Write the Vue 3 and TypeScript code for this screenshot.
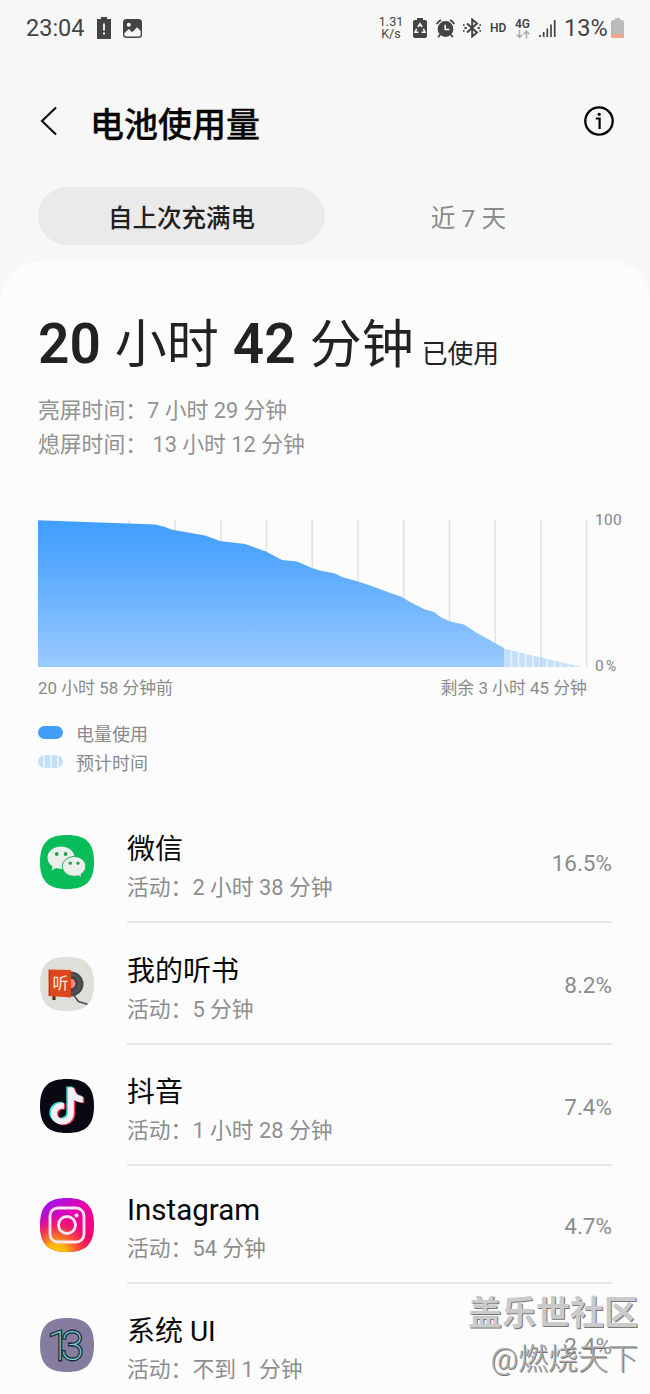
<script setup lang="ts">
interface AppUsage {
  id: string
  name: string
  activity: string
  percent: string
}

const apps: AppUsage[] = [
  { id: 'wechat', name: '微信', activity: '活动：2 小时 38 分钟', percent: '16.5%' },
  { id: 'audiobook', name: '我的听书', activity: '活动：5 分钟', percent: '8.2%' },
  { id: 'douyin', name: '抖音', activity: '活动：1 小时 28 分钟', percent: '7.4%' },
  { id: 'instagram', name: 'Instagram', activity: '活动：54 分钟', percent: '4.7%' },
  { id: 'systemui', name: '系统 UI', activity: '活动：不到 1 分钟', percent: '2.4%' },
]

const gridLines: number[] = Array.from({ length: 11 }, (_, i) => 91.3 + i * 45.74)
const stripes: number[] = Array.from({ length: 11 }, (_, i) => 473.4 + i * 7.15)
const squircle = 'M27 0C46 0 54 8 54 27S46 54 27 54 0 46 0 27 8 0 27 0Z'
const note = 'M27.5 8H33.5C34 13 37.5 16.5 42.5 17V23C39 23 36 22 33.5 20.2V33.5C33.5 40.5 28 45 22 45C15.5 45 10.5 40 10.5 34C10.5 27.5 16 22.5 23.5 23.2V29.5C20 28.7 16.7 30.7 16.7 34C16.7 37 19 39 22 39C25.3 39 27.5 36.7 27.5 33.5Z'
</script>

<template>
  <main class="screen">
    <header class="status">
      <span class="clock">23:04</span>
      <svg class="warn" width="14" height="22" viewBox="0 0 14 22"><path d="M4 0h6v2h4v20H0V2h4z" fill="#444" /><path d="M7 6.5v7M7 15.5v2" stroke="#fff" stroke-width="1.8" /></svg>
      <svg class="photo" width="19" height="19" viewBox="0 0 19 19"><rect width="19" height="19" rx="3.5" fill="#444" /><circle cx="5.8" cy="5.8" r="2" fill="#f7f7f7" /><path d="M1.3 14.3l4.5-4.2 3.4 3.2 4.9-5.1 3.6 3.7v3.3q0 2.2-2.2 2.2h-12q-2.2 0-2.2-2.2z" fill="#f7f7f7" /></svg>
      <span class="spacer"></span>
      <span class="speed"><span>1.31</span><span>K/s</span></span>
      <svg class="saver" width="14" height="20" viewBox="0 0 14 20"><path d="M4 0h6v2h2q2 0 2 2v14q0 2-2 2H2q-2 0-2-2V4q0-2 2-2h2z" fill="#444" /><path d="M4.900 9L7 5.800 9.100 9M10.400 10.800l1.500 3.400H8.500M3.600 10.800l-1.500 3.400h3.400" fill="none" stroke="#f7f7f7" stroke-width="1.600" /></svg>
      <svg class="alarm" width="19" height="19" viewBox="0 0 19 19"><circle cx="9.5" cy="10" r="7.9" fill="#444" /><path d="M.8 5.200Q2 2.400 5 1.200M14 1.200q3 1.200 4.200 4M4.200 15.500l-2 2.700M14.800 15.500l2 2.700" fill="none" stroke="#444" stroke-width="1.800" /><path d="M9.200 5.800v4.700h4.200" fill="none" stroke="#fff" stroke-width="1.5" /></svg>
      <svg class="bt" width="18" height="20" viewBox="0 0 18 20"><path d="M4 5.500l10 9-4.800 4V1.500l4.800 4-10 9" fill="none" stroke="#444" stroke-width="2" /><path d="M1.500 10h2.300M14.500 10h2.300M0 6.800l1.600.7M18 6.800l-1.600.7M0 13.200l1.600-.7M18 13.200l-1.600-.7" stroke="#444" stroke-width="1.900" /></svg>
      <span class="hd">HD</span>
      <span class="network"><span>4G</span><svg width="14" height="9" viewBox="0 0 14 9"><path d="M3.5 0v7M.7 4.5l2.8 3 2.8-3M10.5 8.5v-7M7.7 4.2l2.8-3 2.8 3" fill="none" stroke="#aaa" stroke-width="1.5" /></svg></span>
      <svg class="signal" width="17" height="17" viewBox="0 0 17 17"><path d="M1 15v2M4.7 12v5M8.3 8.5V17M12 4.5V17M15.7 0v17" stroke="#444" stroke-width="1.7" /></svg>
      <span class="level">13%</span>
      <svg class="battery" width="13" height="20" viewBox="0 0 13 20"><path d="M4 0h5v2h2q2 0 2 2v14q0 2-2 2H2q-2 0-2-2V4q0-2 2-2h2z" fill="#bbb" /><path d="M0 16h13v2q0 2-2 2H2q-2 0-2-2z" fill="#f4a58d" /></svg>
    </header>

    <nav class="titlebar">
      <svg class="back" width="18" height="30" viewBox="0 0 18 30"><path d="M16 1.5L2 15l14 13.5" fill="none" stroke="#111" stroke-width="2.2" /></svg>
      <h1>电池使用量</h1>
      <svg class="info" width="30" height="30" viewBox="0 0 30 30"><circle cx="15" cy="15" r="13.7" fill="none" stroke="#000" stroke-width="2.3" /><circle cx="15.2" cy="8.3" r="1.6" /><path d="M11.8 12.5h3.8V23" fill="none" stroke="#000" stroke-width="2.2" /></svg>
    </nav>

    <div class="tabs">
      <button class="tab active">自上次充满电</button>
      <button class="tab">近 7 天</button>
    </div>

    <section class="panel">
      <h2 class="total"><b>20</b><span>小时</span><b>42</b><span>分钟</span><small>已使用</small></h2>
      <p class="detail">亮屏时间：7 小时 29 分钟</p>
      <p class="detail">熄屏时间： 13 小时 12 分钟</p>

      <div class="chart">
        <svg width="551" height="147" viewBox="0 0 551 147">
          <defs>
            <linearGradient id="usage" x1="0" y1="0" x2="0" y2="1"><stop offset="0" stop-color="#419fff" /><stop offset=".25" stop-color="#52a6ff" /><stop offset="1" stop-color="#9acaff" /></linearGradient>
            <clipPath id="forecast"><path d="M466 128.5L544 147H466Z" /></clipPath>
          </defs>
          <path v-for="x in gridLines" :key="x" :d="`M${x} 0V147`" stroke="#e4e4e5" stroke-width="1.7" />
          <path d="M0 .3L117 4.5 127 7 133 9.5 167 15.5 182 21 207 24 228 31.5 244 40 259 41.5 274 48 282 50.5 297 53.5 304 57 320 61.5 335 66.5 351 72.5 364 77 372 82 387 89.5 396 92 403 97.5 412 101.5 426 104.5 439 113 457 123 466 128V147H0Z" fill="url(#usage)" />
          <g clip-path="url(#forecast)">
            <path d="M466 128.5L544 147H466Z" fill="#c5dff8" />
            <path v-for="x in stripes" :key="x" :d="`M${x} 120v27`" stroke="#e6f2fd" stroke-width="1.6" />
            <path d="M503 120v27" stroke="#b9d3ec" stroke-width="1.5" />
          </g>
        </svg>
        <div class="scale"><span>100</span><span>0<i>%</i></span></div>
      </div>
      <div class="range"><span>20 小时 58 分钟前</span><span>剩余 3 小时 45 分钟</span></div>
      <ul class="legend">
        <li><span class="pill"></span>电量使用</li>
        <li><span class="pill expected"></span>预计时间</li>
      </ul>

      <ul class="apps">
        <li v-for="app in apps" :key="app.id" :class="['app', app.id]">
          <svg class="icon" width="54" height="54" viewBox="0 0 54 54">
            <template v-if="app.id === 'wechat'">
              <path :d="squircle" fill="#07bd59" />
              <path d="M21 11.5c-7.8 0-13.5 5-13.5 11.2 0 3.6 1.9 6.6 5 8.7l-1 4 4.8-2.3q2.2.8 4.7.8c7.5 0 13.5-5 13.5-11.2S28.800 11.500 21 11.500z" fill="#ebefec" />
              <path d="M34.300 21.500c-6.600 0-12 4.400-12 9.900s5.400 9.900 12 9.900q2 0 3.900-.6l3.600 2-.8-3.500c3-1.900 4.800-4.700 4.800-7.800 0-5.500-5.200-9.900-11.500-9.900z" fill="#ebefec" stroke="#18ae5b" stroke-width="1" />
              <g fill="#239c5b"><circle cx="16.800" cy="19" r="1.900" /><circle cx="25.600" cy="19" r="1.900" /><circle cx="30.300" cy="28.200" r="1.600" /><circle cx="38" cy="28.200" r="1.600" /></g>
            </template>
            <template v-else-if="app.id === 'audiobook'">
              <path :d="squircle" fill="#dfded8" />
              <circle cx="31" cy="27" r="12.500" fill="#48494c" /><circle cx="31" cy="27" r="9" fill="none" stroke="#68696c" stroke-width=".7" /><circle cx="30.500" cy="26.500" r="5.500" fill="#ed8a7d" stroke="#292a2c" />
              <path d="M12.500 39h3v4h-3z" fill="#4e2a20" /><path d="M8.500 12.500L31 13v27.500L8.500 39z" fill="#dc471d" /><path d="M9.500 13v26" stroke="#b93717" />
              <text x="12.500" y="32" font-size="16" fill="#ffe9df" class="cover">听</text>
              <path d="M34 38.500l4.500 6 9 2.800" fill="none" stroke="#4c4c4c" stroke-width="1.500" />
            </template>
            <template v-else-if="app.id === 'douyin'">
              <path :d="squircle" fill="#080913" />
              <path :d="note" fill="#3cdcd8" transform="translate(-1.200 -.5)" /><path :d="note" fill="#f52f57" transform="translate(1.800 1.200)" /><path :d="note" fill="#f4eff2" transform="translate(.4 .5)" />
            </template>
            <template v-else-if="app.id === 'instagram'">
              <defs>
                <linearGradient id="ig-base" x1=".15" y1="0" x2=".85" y2="1"><stop stop-color="#9818f2" /><stop offset=".42" stop-color="#eb00a8" /><stop offset="1" stop-color="#f20c55" /></linearGradient>
                <radialGradient id="ig-warm" cx=".3" cy="1.050" r=".75"><stop stop-color="#ffd600" /><stop offset=".28" stop-color="#fbb00f" /><stop offset=".65" stop-color="#f34039" stop-opacity=".8" /><stop offset="1" stop-color="#eb0878" stop-opacity="0" /></radialGradient>
              </defs>
              <path :d="squircle" fill="url(#ig-base)" /><path :d="squircle" fill="url(#ig-warm)" />
              <g fill="none" stroke="#ffe6f2" stroke-width="2.800"><rect x="10" y="10" width="34" height="34" rx="8" /><circle cx="27" cy="27" r="8.500" /></g><circle cx="36.500" cy="17.500" r="2.100" fill="#ffe6f2" />
            </template>
            <template v-else>
              <path :d="squircle" fill="#857ca0" />
              <text x="7.500 21" y="41.500" class="version edge">13</text>
              <text x="7.500 21" y="41.500" class="version">13</text>
            </template>
          </svg>
          <div class="body">
            <div class="copy"><strong>{{ app.name }}</strong><span>{{ app.activity }}</span></div>
            <span class="percent">{{ app.percent }}</span>
          </div>
        </li>
      </ul>
    </section>
    <div class="watermark"><b>盖乐世社区</b><span>@燃烧天下</span></div>
  </main>
</template>

<style>
body { margin: 0; overflow: hidden; }
</style>

<style scoped>
* { box-sizing: border-box; }
.screen { position: relative; width: 650px; height: 1394px; overflow: hidden; background: #f7f7f7; font-family: Roboto, "Noto Sans CJK SC", sans-serif; color: #222; }
h1, h2, p, ul { margin: 0; padding: 0; font-weight: 400; }
ul { list-style: none; }
svg { display: block; flex: none; }
.status { display: flex; align-items: center; height: 56px; padding: 0 26px 0 26px; color: #444; white-space: nowrap; }
.clock { width: 71px; font-size: 23.500px; }
.photo { margin-left: 12px; }
.spacer { flex: 1; }
.speed { display: flex; flex-direction: column; align-items: center; width: 26px; font-size: 12.500px; line-height: 12px; margin-right: 9px; }
.saver { margin-right: 9px; }
.alarm { margin-right: 8px; }
.bt { margin-right: 9px; }
.hd { width: 17px; font-size: 12px; font-weight: 600; margin-right: 7px; }
.network { display: flex; flex-direction: column; align-items: center; width: 17px; font-size: 12px; line-height: 12px; font-weight: 600; margin-right: 8px; }
.signal { margin-right: 8px; }
.level { width: 46px; font-size: 23.500px; }
.status .saver, .status .alarm, .status .bt, .status .hd, .status .network, .status .speed, .status .signal, .status .level { transform: translateX(-1px); }
.titlebar { display: flex; align-items: center; height: 131px; padding: 0 36px 0 40px; }
.back, .info { margin-bottom: 1px; }
h1 { flex: 1; margin: 7px 0 0 32px; font-size: 34px; line-height: 50px; font-weight: 500; -webkit-text-stroke: .3px #050505; color: #050505; }
.tabs { display: flex; height: 74px; padding: 0 38px; }
.tab { width: 287px; height: 58px; padding: 6px 0 0; border: 0; border-radius: 29px; background: transparent; font: 400 24.700px/52px Roboto, "Noto Sans CJK SC", sans-serif; color: #8b8b8b; }
.active { background: #eaeaea; color: #202020; font-size: 24.500px; font-weight: 500; }
.panel { height: 1140px; padding: 43px 38px 0; border-radius: 40px 40px 0 0; background: #fcfcfc; }
.total { display: flex; align-items: baseline; height: 80px; line-height: 80px; white-space: nowrap; }
.total b { font-size: 55px; font-weight: 600; }
.total span { margin: 0 14px 0 14px; font-size: 52px; }
.total small { margin-left: -6px; font-size: 25.800px; }
.detail { height: 34px; font-size: 21.800px; line-height: 34px; color: #929292; white-space: pre; }
.detail:first-of-type { margin-top: 10px; }
.chart { display: flex; height: 147px; margin-top: 58px; }
.scale { display: flex; flex-direction: column; justify-content: space-between; margin: -9px 0 -8px 6px; font-size: 15.500px; line-height: 18px; letter-spacing: .3px; color: #858585; }
.scale i { font-style: normal; margin-left: 2px; font-size: 14px; }
.range { display: flex; justify-content: space-between; width: 549px; height: 42px; font-size: 16.900px; line-height: 43px; color: #8a8a8a; }
.legend { margin-top: 11px; }
.legend li { display: flex; align-items: center; height: 29px; font-size: 18px; line-height: 31px; color: #8a8a8a; }
.pill { width: 25px; height: 13px; margin: -4px 13px 0 0; border-radius: 7px; background: #419ffb; }
.expected { background: repeating-linear-gradient(90deg, #c5dff8 0 5.500px, #e6f2fd 5.500px 7px); }
.apps { margin-top: 23px; }
.app { display: flex; align-items: center; height: 122px; padding-left: 1.500px; }
.icon { margin: 0 33.500px 0 0; }
.body { display: flex; align-items: center; justify-content: space-between; width: 485px; height: 100%; border-bottom: 2px solid #e7e7e7; }
.copy { display: flex; flex-direction: column; padding-top: 15px; }
.copy strong { height: 38px; font-size: 28px; line-height: 38px; font-weight: 400; color: #080808; }
.copy span { height: 38px; font-size: 21.800px; line-height: 37px; color: #8e8e8e; }
.percent { padding-top: 4px; font-size: 22.500px; color: #8c8c8c; }
.douyin { height: 121px; }
.instagram { height: 118px; }
.instagram .copy, .systemui .copy { padding-top: 12px; }
.instagram .copy strong { font-size: 29.500px; line-height: 37px; }
.systemui .body { border: 0; }
.systemui .percent { padding-top: 1px; }
.cover { font-family: "Noto Sans CJK SC", sans-serif; }
.version { font: 100 41px Roboto, sans-serif; fill: #83cdd0; stroke: #83cdd0; stroke-width: .2; }
.version.edge { stroke: #142b3b; stroke-width: 2.800; }
.watermark { position: absolute; right: 12px; top: 1290px; display: flex; flex-direction: column; align-items: flex-end; color: #cacaca; text-shadow: 1px 1px 0 #777; white-space: nowrap; }
.watermark b { font-size: 34px; line-height: 46px; font-weight: 600; }
.watermark span { font-size: 30px; line-height: 46px; font-weight: 300; color: #aaa; }
</style>
